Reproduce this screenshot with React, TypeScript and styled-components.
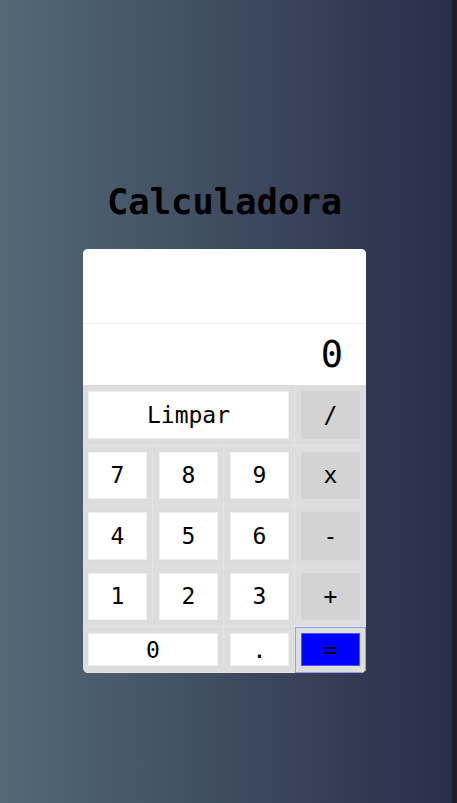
import React from "react";
import styled, { createGlobalStyle } from "styled-components";

const Global = createGlobalStyle`
  html, body { margin: 0; padding: 0; }
  body {
    font-family: "DejaVu Sans Mono", "Liberation Mono", monospace;
    background: #202020;
  }
`;

const Page = styled.div`
  height: 803px;
  box-sizing: border-box;
  margin-right: 5px;
  padding-right: 3px;
  background: linear-gradient(to right, #536976, #292e49);
  display: flex;
  flex-direction: column;
  align-items: center;
  padding-top: 176px;
`;

const Title = styled.h1`
  margin: 0 0 22px 0;
  font-size: 35.5px;
  font-weight: bold;
  color: #000;
  line-height: 51px;
`;

const Card = styled.div`
  width: 283px;
  border-radius: 5px;
  overflow: hidden;
  background: #dddddd;
`;

const Previous = styled.div`
  height: 74px;
  background: #fff;
  border-bottom: 1px solid #eeeeee;
`;

const Current = styled.div`
  height: 61px;
  background: #fff;
  display: flex;
  align-items: center;
  justify-content: flex-end;
  padding-right: 23px;
  font-size: 37px;
`;

const Keys = styled.div`
  display: grid;
  margin-left: -1px;
  grid-template-columns: repeat(4, 71px);
  grid-template-rows: repeat(4, 60.5px) 46px;
`;

const Cell = styled.div<{ $span?: number; $focus?: boolean }>`
  grid-column: span ${(p) => p.$span ?? 1};
  padding: 6px 5px 6px 6px;
  box-sizing: border-box;
  border-right: 1px solid #e3e3e3;
  border-bottom: 1px solid #e3e3e3;
  display: flex;
  ${(p) => (p.$focus ? "outline: 1px solid #9a9aee; outline-offset: -1px;" : "")}
`;

const Key = styled.button<{ $kind?: "num" | "op" | "eq" }>`
  flex: 1;
  margin: 0;
  padding: 0;
  font-family: "DejaVu Sans Mono", "Liberation Mono", monospace;
  font-size: 23px;
  color: #000;
  cursor: pointer;
  border: 1px solid
    ${(p) => (p.$kind === "eq" ? "#5050ff" : p.$kind === "op" ? "#d3d3d3" : "#f0f0f0")};
  background: ${(p) => (p.$kind === "eq" ? "#0000ff" : p.$kind === "op" ? "#d3d3d3" : "#ffffff")};
`;

type K = { label: string; kind?: "num" | "op" | "eq"; span?: number };

const keys: K[] = [
  { label: "Limpar", span: 3 },
  { label: "/", kind: "op" },
  { label: "7" },
  { label: "8" },
  { label: "9" },
  { label: "x", kind: "op" },
  { label: "4" },
  { label: "5" },
  { label: "6" },
  { label: "-", kind: "op" },
  { label: "1" },
  { label: "2" },
  { label: "3" },
  { label: "+", kind: "op" },
  { label: "0", span: 2 },
  { label: "." },
  { label: "=", kind: "eq" },
];

export default function App() {
  return (
    <>
      <Global />
      <Page>
        <Title>Calculadora</Title>
        <Card>
          <Previous />
          <Current>0</Current>
          <Keys>
            {keys.map((k) => (
              <Cell key={k.label} $span={k.span} $focus={k.kind === "eq"}>
                <Key $kind={k.kind ?? "num"}>{k.label}</Key>
              </Cell>
            ))}
          </Keys>
        </Card>
      </Page>
    </>
  );
}
